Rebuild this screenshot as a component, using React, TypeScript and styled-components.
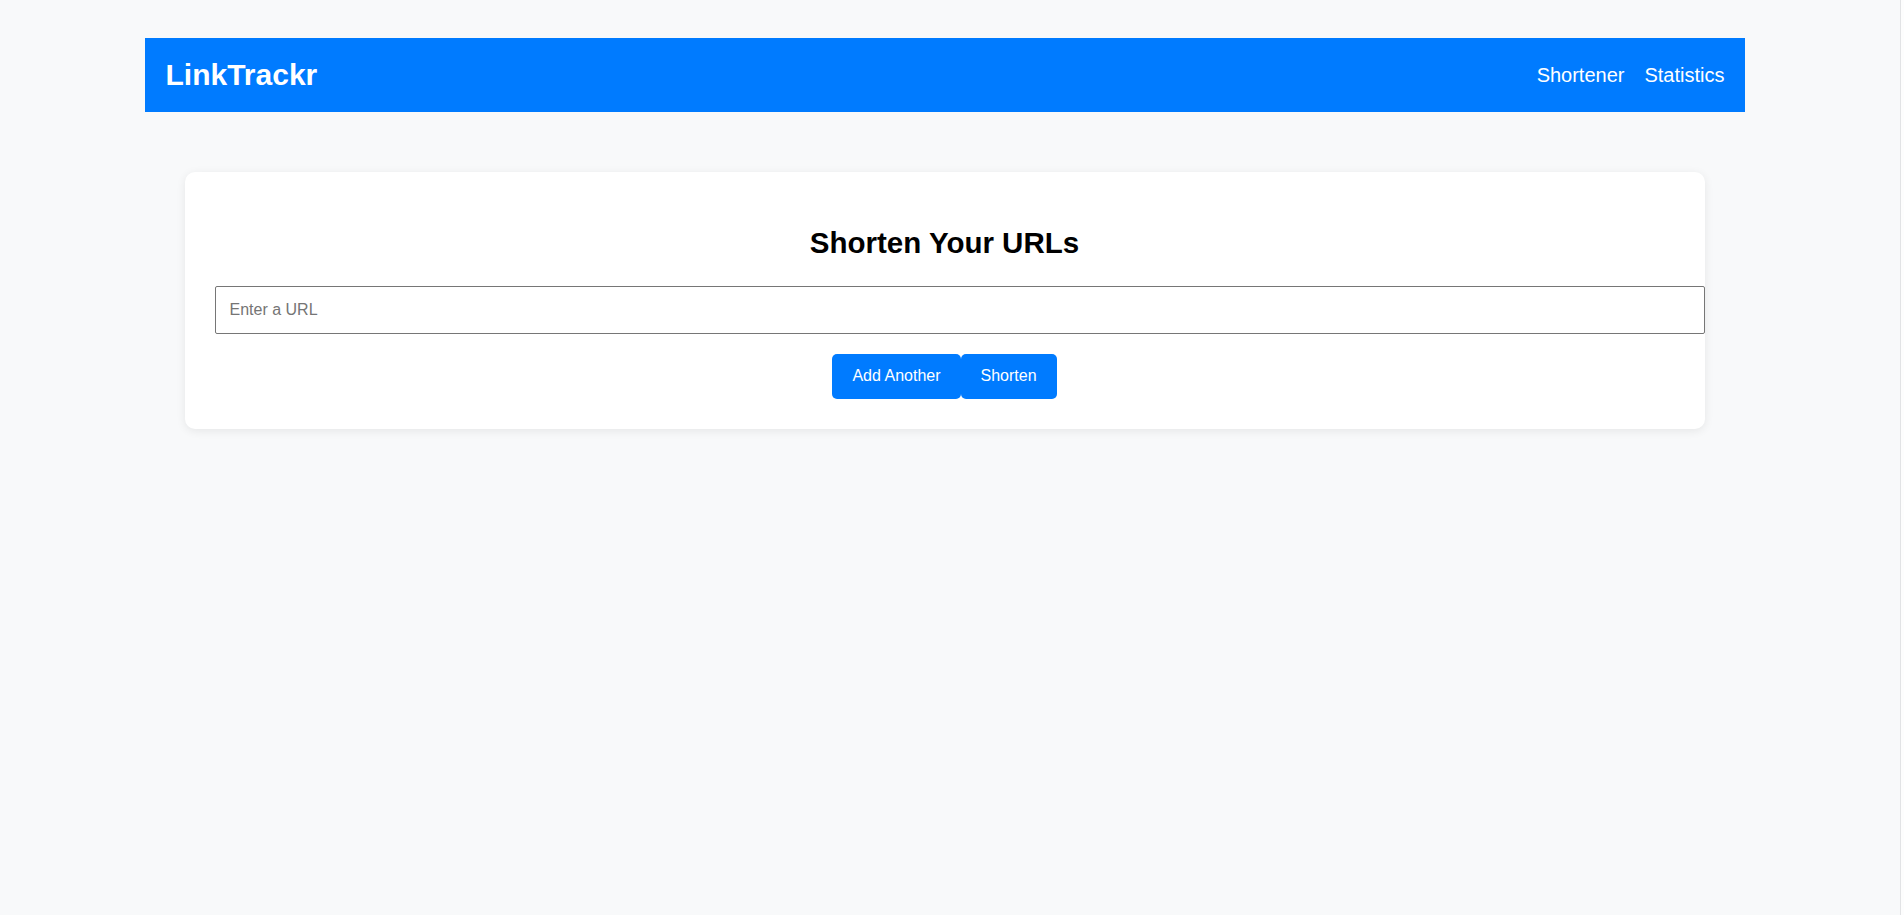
import React from "react";
import styled, { createGlobalStyle } from "styled-components";

const GlobalStyle = createGlobalStyle`
  html, body {
    margin: 0;
    padding: 0;
    background: #fdfdfd;
  }
  body {
    font-family: "Liberation Sans", Arial, sans-serif;
  }
  * {
    box-sizing: border-box;
  }
`;

const Page = styled.div`
  width: 1901px;
  min-height: 915px;
  background: #f8f9fa;
  border-right: 1px solid #e2e3e5;
  padding: 38px 11px 40px 0;
`;

const Container = styled.div`
  max-width: 1600px;
  margin: 0 auto;
`;

const Header = styled.header`
  display: flex;
  align-items: center;
  justify-content: space-between;
  height: 74px;
  padding: 0 20px;
  background: #007bff;
  color: #fff;
`;

const Logo = styled.div`
  font-family: "Liberation Sans", Arial, sans-serif;
  font-size: 30px;
  font-weight: 700;
  line-height: 1;
  padding-left: 1px;
`;

const Nav = styled.nav`
  display: flex;
  gap: 20px;
`;

const NavLink = styled.a`
  color: #fff;
  text-decoration: none;
  font-size: 20px;
  cursor: pointer;
`;

const Card = styled.section`
  margin: 60px 40px 0;
  padding: 30px;
  background: #fff;
  border-radius: 10px;
  box-shadow: 0 2px 10px rgba(0, 0, 0, 0.08);
`;

const Title = styled.h2`
  margin: 24px 0 25.5px;
  text-align: center;
  font-size: 29.5px;
  font-weight: 700;
  color: #000;
`;

const UrlInput = styled.input`
  display: block;
  box-sizing: content-box;
  width: 100%;
  height: 20px;
  padding: 13px 14px;
  border: 1px solid #767676;
  border-radius: 2px;
  font-family: "Liberation Sans", Arial, sans-serif;
  font-size: 16px;
  color: #000;
  background: #fff;
  outline: none;
  &::placeholder {
    color: #757575;
  }
`;

const Actions = styled.div`
  display: flex;
  justify-content: center;
  margin-top: 20px;
`;

const Button = styled.button`
  height: 45px;
  padding: 0 20px;
  border: none;
  border-radius: 5px;
  background: #007bff;
  color: #fff;
  font-family: "Liberation Sans", Arial, sans-serif;
  font-size: 16px;
  cursor: pointer;
`;

export default function App() {
  return (
    <>
      <GlobalStyle />
      <Page>
        <Container>
          <Header>
            <Logo>LinkTrackr</Logo>
            <Nav>
              <NavLink>Shortener</NavLink>
              <NavLink>Statistics</NavLink>
            </Nav>
          </Header>
          <Card>
            <Title>Shorten Your URLs</Title>
            <UrlInput type="text" placeholder="Enter a URL" />
            <Actions>
              <Button>Add Another</Button>
              <Button>Shorten</Button>
            </Actions>
          </Card>
        </Container>
      </Page>
    </>
  );
}
